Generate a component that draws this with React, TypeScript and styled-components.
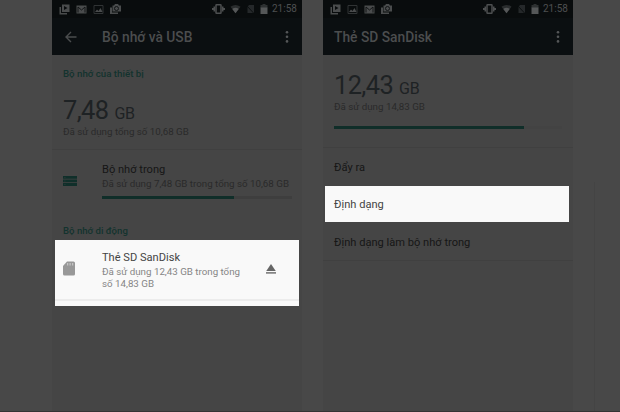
import React from "react";
import styled, { createGlobalStyle } from "styled-components";

const Global = createGlobalStyle`
  * { box-sizing: border-box; }
  body { margin: 0; background: #484848; overflow: hidden; font-family: Roboto, "Noto Sans", sans-serif; }
  svg { display: block; flex: none; }
`;

const Stage = styled.main`
  width: 620px;
  height: 412px;
  padding-left: 52px;
  display: flex;
  gap: 21px;
  background: #484848;
  border-bottom: 1px solid #353334;
  overflow: hidden;
`;

const Phone = styled.section`
  width: 250px;
  height: 412px;
  flex: none;
  background: #454545;
  display: flex;
  flex-direction: column;
`;

const PageEdge = styled.div`
  width: 1px;
  height: 230px;
  margin-top: 182px;
  background: #444444;
`;

const Header = styled.header`
  height: 55px;
  flex: none;
  background: #0b0f11;
  color: #4b4d4e;
`;

const StatusBar = styled.div`
  height: 18px;
  display: flex;
  justify-content: space-between;
  background: #090c0d;
  padding: 3px 5px 0 7px;
`;

const Notifications = styled.div`
  display: flex;
  gap: 6px;
  align-items: center;
  height: 12px;
`;

const SystemIcons = styled.div`
  display: flex;
  align-items: center;
  height: 12px;
  color: #4d4f50;
`;

const Clock = styled.span`
  width: 25px;
  margin-left: 4px;
  font-size: 10px;
  line-height: 12px;
  white-space: nowrap;
`;

const AppBar = styled.div<{ $left: number }>`
  height: 37px;
  display: flex;
  align-items: center;
  padding-left: ${(p) => p.$left}px;
  padding-right: 8px;
`;

const Title = styled.h1<{ $left?: number }>`
  margin: 0 auto 0 ${(p) => p.$left ?? 0}px;
  font-size: 13.8px;
  line-height: 20px;
  font-weight: 500;
  white-space: nowrap;
`;

const Label = styled.div<{ $size?: number; $line?: number; $color?: string; $weight?: number }>`
  font-size: ${(p) => p.$size ?? 10}px;
  line-height: ${(p) => p.$line ?? 14}px;
  color: ${(p) => p.$color ?? "#2a2a2a"};
  font-weight: ${(p) => p.$weight ?? 400};
  white-space: nowrap;
`;

const Summary = styled.div<{ $height: number; $top: number }>`
  height: ${(p) => p.$height}px;
  padding: ${(p) => p.$top}px 11px 0;
  border-bottom: 1px solid #404040;
`;

const Amount = styled.div<{ $top?: number }>`
  display: flex;
  align-items: baseline;
  gap: 6px;
  height: 30px;
  margin-top: ${(p) => p.$top ?? 0}px;
  line-height: 30px;
  font-size: 25.4px;
  letter-spacing: -0.6px;
  color: #1e2224;
  white-space: nowrap;
`;

const Unit = styled.span`
  font-size: 16px;
  letter-spacing: -0.2px;
`;

const Track = styled.div<{ $top: number; $color: string }>`
  height: 3px;
  margin-top: ${(p) => p.$top}px;
  background: ${(p) => p.$color};
`;

const Fill = styled.div<{ $width: number }>`
  width: ${(p) => p.$width}px;
  height: 3px;
  background: #102e29;
`;

const StorageRow = styled.div`
  height: 73px;
  display: grid;
  grid-template-columns: 39px 190px;
  padding: 13px 0 0 11px;
`;

const IconSlot = styled.div<{ $top: number }>`
  padding-top: ${(p) => p.$top}px;
`;

const SectionName = styled.div`
  height: 17px;
  padding: 1px 0 0 11px;
`;

const Highlight = styled.div<{ $height: number; $left: number }>`
  width: 244px;
  height: ${(p) => p.$height}px;
  margin-left: ${(p) => p.$left}px;
  background: #f9f9f9;
`;

const CardBody = styled.div`
  height: 61px;
  display: grid;
  grid-template-columns: 39px 164px 1fr;
  padding: 11px 0 0 8px;
  border-bottom: 2px solid #ececec;
`;

const Option = styled.div<{ $height: number; $top: number; $left: number; $rule?: boolean }>`
  height: ${(p) => p.$height}px;
  padding: ${(p) => p.$top}px 0 0 ${(p) => p.$left}px;
  border-bottom: ${(p) => (p.$rule ? "1px solid #404040" : "none")};
`;

const Gap = styled.span<{ $w: number }>`
  width: ${(p) => p.$w}px;
`;

const PlayIcon = () => (
  <svg width="11" height="11" viewBox="0 0 22 22" fill="#4a4c4d">
    <path d="M1 6h3v12h12v3H1z" />
    <path fillRule="evenodd" d="M6 1h15v15H6zM10 4v8l7-4z" />
  </svg>
);
const MailIcon = () => (
  <svg width="11" height="11" viewBox="0 0 22 22">
    <path fill="#4a4c4d" d="M1 3h20v16H1z" />
    <path fill="none" stroke="#121516" strokeWidth="2" d="M4 17V6l7 6 7-6v11" />
  </svg>
);
const ImageIcon = () => (
  <svg width="11" height="11" viewBox="0 0 22 22">
    <path fill="none" stroke="#303334" strokeWidth="2" d="M2 3h18v16H2z" />
    <path fill="#4a4c4d" d="M4 16l4-5 3 3 4-6 4 8z" />
  </svg>
);
const CameraIcon = () => (
  <svg width="12" height="12" viewBox="0 0 24 24">
    <path fill="#4a4c4d" d="M0 9h4v10h12v3H0zM5 5h3l2-3h6l2 3h4v12H5z" />
    <circle cx="13" cy="11" r="4" fill="none" stroke="#111415" strokeWidth="2" />
  </svg>
);
const VibrateIcon = () => (
  <svg width="13" height="12" viewBox="0 0 26 24" fill="none" stroke="currentColor">
    <rect x="8" y="3.5" width="10" height="17" rx="1" strokeWidth="3" />
    <path strokeWidth="3" d="M4.5 7v10M21.5 7v10M1.5 10v4M24.5 10v4" />
  </svg>
);
const WifiIcon = () => (
  <svg width="11" height="10" viewBox="0 0 24 20">
    <path fill="#292c2d" d="M1 5Q12-3 23 5L12 19z" />
    <path fill="#555758" d="M5 10q7-5 14 0l-7 9z" />
  </svg>
);
const NoSimIcon = () => (
  <svg width="9" height="10" viewBox="0 0 18 20">
    <path fill="#25282a" d="M6 2h10v16H3V6z" />
    <path stroke="#0b0e0f" strokeWidth="2" d="M1 3l15 16" />
  </svg>
);
const BatteryIcon = () => (
  <svg width="8" height="10" viewBox="0 0 16 20">
    <path fill="#2d3031" d="M5 0h6v2h4v6H1V2h4z" />
    <path fill="#555758" d="M1 7h14v13H1z" />
  </svg>
);
const BackIcon = () => (
  <svg width="12" height="12" viewBox="0 0 24 24" fill="none" stroke="currentColor" strokeWidth="2.8">
    <path d="M23 12H3M12 2L2 12l10 10" />
  </svg>
);
const MoreIcon = () => (
  <svg width="14" height="14" viewBox="0 0 14 14" fill="#555758">
    <circle cx="7" cy="2.2" r="1.3" />
    <circle cx="7" cy="6.8" r="1.3" />
    <circle cx="7" cy="11.4" r="1.3" />
  </svg>
);
const StorageIcon = () => (
  <svg width="14" height="10" viewBox="0 0 28 20">
    <path fill="#102f2a" d="M0 0h28v5.6H0zM0 7h28v5.6H0zM0 14.2h28V20H0z" />
    <path fill="#263936" d="M2.5 2h2.5v2H2.5zM2.5 9h2.5v2H2.5zM2.5 16h2.5v2H2.5z" />
  </svg>
);
const SdIcon = () => (
  <svg width="12" height="15" viewBox="0 0 24 30">
    <path fill="#989898" d="M8 1h13q3 0 3 3v22q0 3-3 3H3q-3 0-3-3V10z" />
    <path fill="#c4c4c4" d="M8 4h2.5v5H8zM13 4h2.5v5H13zM18 4h2.5v5H18z" />
  </svg>
);
const EjectIcon = () => (
  <svg width="10" height="10" viewBox="0 0 20 20">
    <path fill="#666" d="M10 0l9.5 14H.5z" />
    <path fill="#858585" d="M0 16h20v3.5H0z" />
  </svg>
);

const Status = ({ order }: { order: "mail" | "image" }) => (
  <StatusBar>
    <Notifications>
      <PlayIcon />
      {order === "mail" ? <MailIcon /> : <ImageIcon />}
      {order === "mail" ? <ImageIcon /> : <MailIcon />}
      <CameraIcon />
    </Notifications>
    <SystemIcons>
      <VibrateIcon />
      <Gap $w={5} />
      <WifiIcon />
      <Gap $w={5} />
      <NoSimIcon />
      <Gap $w={5} />
      <BatteryIcon />
      <Clock>21:58</Clock>
    </SystemIcons>
  </StatusBar>
);

const Overview = () => (
  <Phone>
    <Header>
      <Status order="mail" />
      <AppBar $left={13}>
        <BackIcon />
        <Title $left={25}>Bộ nhớ và USB</Title>
        <MoreIcon />
      </AppBar>
    </Header>
    <Summary $height={95} $top={12}>
      <Label $color="#13332e" $weight={500} $size={9.7}>Bộ nhớ của thiết bị</Label>
      <Amount $top={14}>7,48 <Unit>GB</Unit></Amount>
      <Label $size={9.75}>Đã sử dụng tổng số 10,68 GB</Label>
    </Summary>
    <StorageRow>
      <IconSlot $top={13}><StorageIcon /></IconSlot>
      <div>
        <Label $size={11.1} $color="#161616">Bộ nhớ trong</Label>
        <Label $size={9.75}>Đã sử dụng 7,48 GB trong tổng số 10,68 GB</Label>
        <Track $top={5} $color="#3e3e3e"><Fill $width={132} /></Track>
      </div>
    </StorageRow>
    <SectionName>
      <Label $color="#13332e" $weight={500} $size={9.6}>Bộ nhớ di động</Label>
    </SectionName>
    <Highlight $height={66} $left={3}>
      <CardBody>
        <IconSlot $top={10}><SdIcon /></IconSlot>
        <div>
          <Label $size={11.1} $color="#444">Thẻ SD SanDisk</Label>
          <Label $size={9.75} $line={13} $color="#858585">Đã sử dụng 12,43 GB trong tổng</Label>
          <Label $size={9.75} $line={11} $color="#858585">số 14,83 GB</Label>
        </div>
        <IconSlot $top={13}><EjectIcon /></IconSlot>
      </CardBody>
    </Highlight>
  </Phone>
);

const CardDetails = () => (
  <Phone>
    <Header>
      <Status order="image" />
      <AppBar $left={11}>
        <Title>Thẻ SD SanDisk</Title>
        <MoreIcon />
      </AppBar>
    </Header>
    <Summary $height={93} $top={15}>
      <Amount>12,43 <Unit>GB</Unit></Amount>
      <Label $size={9.75}>Đã sử dụng 14,83 GB</Label>
      <Track $top={12} $color="#434343"><Fill $width={190} /></Track>
    </Summary>
    <Option $height={38} $top={13} $left={11}>
      <Label $size={11.1} $color="#161616">Đẩy ra</Label>
    </Option>
    <Highlight $height={36} $left={2}>
      <Option $height={36} $top={12} $left={9}>
        <Label $size={11.1} $color="#444">Định dạng</Label>
      </Option>
    </Highlight>
    <Option $height={39} $top={14} $left={11} $rule>
      <Label $size={11.1} $color="#161616">Định dạng làm bộ nhớ trong</Label>
    </Option>
  </Phone>
);

export default function App() {
  return (
    <>
      <Global />
      <Stage>
        <Overview />
        <CardDetails />
        <PageEdge />
      </Stage>
    </>
  );
}
